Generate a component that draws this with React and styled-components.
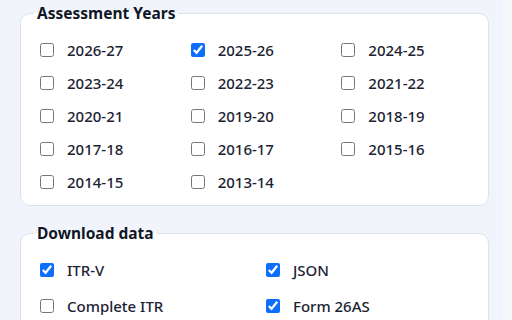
import React from "react";
import styled, { createGlobalStyle } from "styled-components";

const GlobalStyle = createGlobalStyle`
  html, body {
    margin: 0;
    padding: 0;
    background: #f1f4fa;
    font-family: "Noto Sans", "Open Sans", sans-serif;
  }
`;

const Page = styled.div`
  width: 512px;
  height: 320px;
  overflow: hidden;
  display: flex;
`;

const Main = styled.main`
  flex: 1;
  padding: 3px 14px 0 20px;
  display: flex;
  flex-direction: column;
  gap: 17px;
`;

const Edge = styled.div`
  width: 9px;
  background: #f5f7fb;
`;

const Group = styled.fieldset`
  margin: 0;
  padding: 16px 20px 12px 19px;
  background: #fff;
  border: 1px solid #dbe2ee;
  border-radius: 10px;
  min-width: 0;
`;

const Legend = styled.legend`
  padding: 0 3px;
  margin-left: -6px;
  font-size: 15.5px;
  font-weight: 700;
  line-height: 20px;
  color: #101828;
`;

const Grid = styled.div`
  display: grid;
  grid-template-columns: repeat(${p => p.$cols}, 1fr);
  column-gap: 24px;
  row-gap: ${p => p.$rowGap}px;
`;

const Option = styled.label`
  display: flex;
  align-items: center;
  gap: 13px;
  height: 22px;
  font-size: 15px;
  font-weight: 500;
  color: #1c2333;
  cursor: pointer;
`;

const Box = styled.input.attrs({ type: "checkbox" })`
  width: 14px;
  height: 14px;
  margin: 0;
  accent-color: #0d6efd;
`;

const years = [
  ["2026-27", false], ["2025-26", true], ["2024-25", false],
  ["2023-24", false], ["2022-23", false], ["2021-22", false],
  ["2020-21", false], ["2019-20", false], ["2018-19", false],
  ["2017-18", false], ["2016-17", false], ["2015-16", false],
  ["2014-15", false], ["2013-14", false],
];

const downloads = [
  ["ITR-V", true], ["JSON", true],
  ["Complete ITR", false], ["Form 26AS", true],
];

function Check({ label, on }) {
  return (
    <Option>
      <Box defaultChecked={on} />
      {label}
    </Option>
  );
}

export default function App() {
  return (
    <Page>
      <GlobalStyle />
      <Main>
        <Group>
          <Legend>Assessment Years</Legend>
          <Grid $cols={3} $rowGap={11}>
            {years.map(([y, on]) => <Check key={y} label={y} on={on} />)}
          </Grid>
        </Group>
        <Group>
          <Legend>Download data</Legend>
          <Grid $cols={2} $rowGap={14}>
            {downloads.map(([d, on]) => <Check key={d} label={d} on={on} />)}
          </Grid>
        </Group>
      </Main>
      <Edge />
    </Page>
  );
}
